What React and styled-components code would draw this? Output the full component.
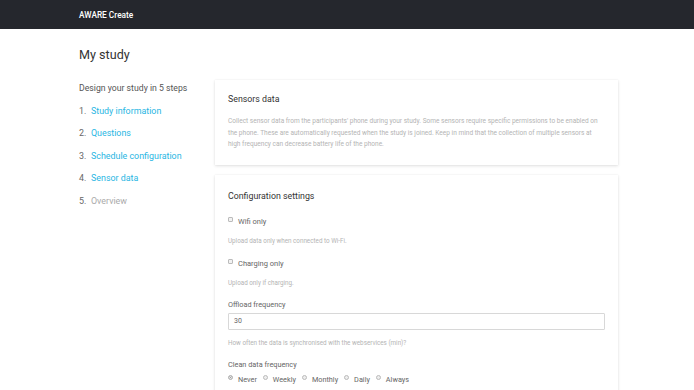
import React from "react";
import styled, { createGlobalStyle } from "styled-components";

const Global = createGlobalStyle`
  html, body { margin: 0; padding: 0; background: #fff; }
  body { font-family: Roboto, "Liberation Sans", Arial, sans-serif; color: #333; overflow: hidden; }
  * { box-sizing: border-box; }
`;

const Header = styled.header`
  height: 29px;
  background: #25272d;
  display: flex;
  align-items: center;
  padding-left: 79px;
`;

const Brand = styled.div`
  color: #fff;
  font-size: 8.3px;
  font-weight: 500;
`;

const Container = styled.main`
  width: 540px;
  margin-left: 79px;
`;

const Title = styled.h1`
  margin: 0;
  padding-top: 18px;
  height: 51px;
  font-size: 12.6px;
  font-weight: 400;
  color: #333;
`;

const Columns = styled.div`
  display: grid;
  grid-template-columns: 126px 403px;
  column-gap: 10px;
`;

const Side = styled.nav`
  padding-top: 3px;
`;

const SideTitle = styled.div`
  font-size: 8.7px;
  color: #555;
  height: 23px;
`;

const Steps = styled.ol`
  margin: 0;
  padding: 0;
  list-style: none;
`;

const Step = styled.li`
  display: flex;
  gap: 5px;
  height: 22.4px;
  font-size: 8.9px;
  color: ${(p) => (p.$active ? "#29b6e3" : "#aaa")};
`;

const Num = styled.span`
  color: #666;
  width: 7px;
`;

const Cards = styled.div`
  display: flex;
  flex-direction: column;
  gap: 10px;
`;

const Card = styled.section`
  background: #fff;
  box-shadow: 0 1px 3px rgba(0, 0, 0, 0.12), 0 0 1px rgba(0, 0, 0, 0.08);
  padding: ${(p) => p.$pad || "14px 13px"};
`;

const CardTitle = styled.h2`
  margin: 0 0 ${(p) => p.$mb || 9}px;
  font-size: 8.8px;
  font-weight: 400;
  color: #333;
  line-height: 12px;
`;

const Para = styled.p`
  margin: 0;
  font-size: 6.55px;
  line-height: 11.6px;
  color: #b4b4b4;
`;

const CheckRow = styled.label`
  display: flex;
  align-items: center;
  gap: 5px;
  font-size: 7.5px;
  color: #666;
  height: 12px;
`;

const Box = styled.span`
  width: 5px;
  height: 5px;
  border: 1px solid #bbb;
  border-radius: 1px;
  background: #f2f2f2;
  margin-top: -4px;
`;

const Help = styled.div`
  font-size: 6.3px;
  color: #b4b4b4;
  margin: ${(p) => p.$m || "8px 0 12px"};
  line-height: 10px;
`;

const Label = styled.div`
  font-size: 7.3px;
  color: #666;
  line-height: 10px;
  margin-top: ${(p) => p.$mt || 0}px;
  margin-bottom: ${(p) => p.$mb || 4}px;
`;

const Input = styled.div`
  height: 17px;
  border: 1px solid #d8d8d8;
  border-radius: 1px;
  font-size: 7px;
  color: #666;
  display: flex;
  align-items: center;
  padding-left: 5px;
  width: 377px;
`;

const Radios = styled.div`
  display: flex;
  align-items: center;
  gap: 6px;
`;

const RadioItem = styled.label`
  display: flex;
  align-items: center;
  gap: 5px;
  font-size: 7.3px;
  color: #666;
`;

const Dot = styled.span`
  width: 5px;
  height: 5px;
  border-radius: 50%;
  border: 1px solid #bbb;
  background: ${(p) => (p.$on ? "#888" : "#eee")};
  box-shadow: ${(p) => (p.$on ? "inset 0 0 0 1px #eee" : "none")};
  margin-top: -3px;
`;

const steps = [
  ["Study information", true],
  ["Questions", true],
  ["Schedule configuration", true],
  ["Sensor data", true],
  ["Overview", false],
];

const radios = ["Never", "Weekly", "Monthly", "Daily", "Always"];

export default function App() {
  return (
    <>
      <Global />
      <Header>
        <Brand>AWARE Create</Brand>
      </Header>
      <Container>
        <Title>My study</Title>
        <Columns>
          <Side>
            <SideTitle>Design your study in 5 steps</SideTitle>
            <Steps>
              {steps.map(([t, a], i) => (
                <Step key={t} $active={a}>
                  <Num>{i + 1}.</Num>
                  <span>{t}</span>
                </Step>
              ))}
            </Steps>
          </Side>
          <Cards>
            <Card $pad="13px 13px 14px 13px">
              <CardTitle $mb={11}>Sensors data</CardTitle>
              <Para>
                Collect sensor data from the participants' phone during your study. Some sensors require specific
                permissions to be enabled on the phone. These are automatically requested when the study is joined. Keep
                in mind that the collection of multiple sensors at high frequency can decrease battery life of the phone.
              </Para>
            </Card>
            <Card $pad="15px 13px 20px 13px">
              <CardTitle $mb={14}>Configuration settings</CardTitle>
              <CheckRow>
                <Box />
                Wifi only
              </CheckRow>
              <Help>Upload data only when connected to Wi-Fi.</Help>
              <CheckRow>
                <Box />
                Charging only
              </CheckRow>
              <Help>Upload only if charging.</Help>
              <Label $mt={1} $mb={3}>
                Offload frequency
              </Label>
              <Input>30</Input>
              <Help $m="8px 0 12px">How often the data is synchronised with the webservices (min)?</Help>
              <Label $mb={5}>Clean data frequency</Label>
              <Radios>
                {radios.map((r, i) => (
                  <RadioItem key={r}>
                    <Dot $on={i === 0} />
                    {r}
                  </RadioItem>
                ))}
              </Radios>
            </Card>
          </Cards>
        </Columns>
      </Container>
    </>
  );
}
